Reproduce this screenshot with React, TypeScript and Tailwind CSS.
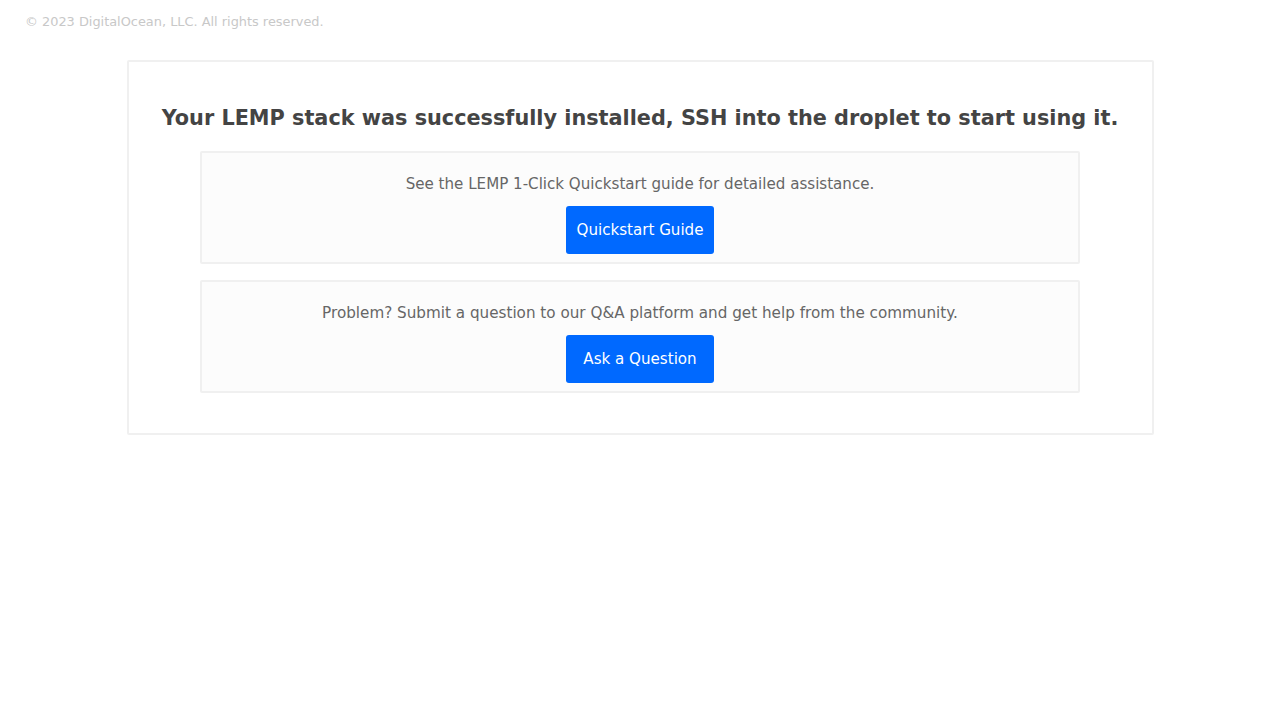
import React from "react";

export default function App() {
  return (
    <div className="min-h-screen bg-white" style={{ fontFamily: '"DejaVu Sans", sans-serif' }}>
      <p className="pl-[25px] pt-[14px] text-[12.9px] leading-[16px] text-[#c8c8c8]">
        © 2023 DigitalOcean, LLC. All rights reserved.
      </p>
      <div className="mx-auto mt-[30px] w-[1027px] rounded-[2px] border-2 border-[#f0f0f0] px-[20px] pt-[40px] pb-[40px]">
        <h1 className="whitespace-nowrap text-center text-[20.8px] font-bold leading-[32px] text-[#444]">
          Your LEMP stack was successfully installed, SSH into the droplet to start using it.
        </h1>
        <div className="mx-auto mt-[17px] flex w-[880px] flex-col gap-[16px]">
          <div className="flex flex-col items-center rounded-[2px] border-2 border-[#f0f0f0] bg-[#fcfcfc] pt-[19px] pb-[8px]">
            <p className="text-[15.1px] leading-[24px] text-[#666]">
              See the LEMP 1-Click Quickstart guide for detailed assistance.
            </p>
            <a className="mt-[10px] flex h-[48px] w-[148px] items-center justify-center rounded-[3px] bg-[#0069ff] text-[15.1px] text-white">
              Quickstart Guide
            </a>
          </div>
          <div className="flex flex-col items-center rounded-[2px] border-2 border-[#f0f0f0] bg-[#fcfcfc] pt-[19px] pb-[8px]">
            <p className="text-[15.2px] leading-[24px] text-[#666]">
              Problem? Submit a question to our Q&amp;A platform and get help from the community.
            </p>
            <a className="mt-[10px] flex h-[48px] w-[148px] items-center justify-center rounded-[3px] bg-[#0069ff] text-[15.1px] text-white">
              Ask a Question
            </a>
          </div>
        </div>
      </div>
    </div>
  );
}
